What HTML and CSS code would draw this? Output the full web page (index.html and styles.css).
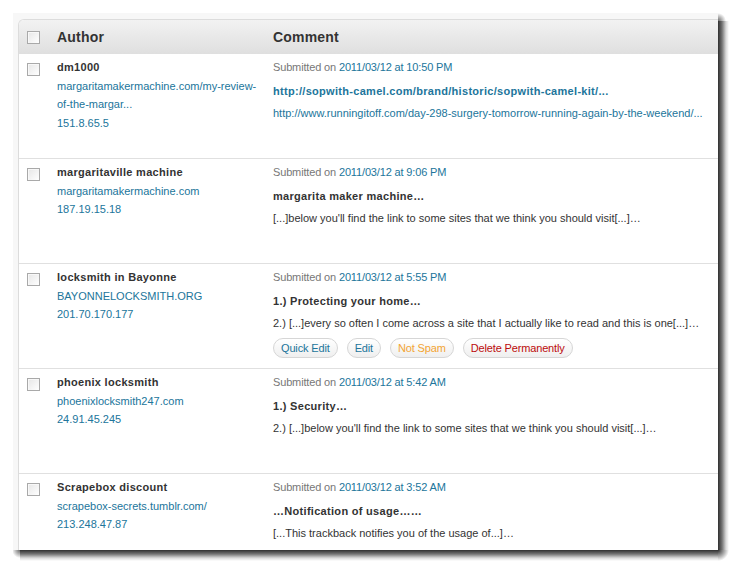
FILE: index.html
```html
<!DOCTYPE html>
<html>
<head>
<meta charset="utf-8">
<link rel="stylesheet" href="styles.css">
</head>
<body>
<div class="frame">
<div class="shot">
  <div class="table">
    <div class="head">
      <div class="cb-cell"><span class="cb"></span></div>
      <div class="th">Author</div>
      <div class="th">Comment</div>
    </div>

    <div class="row">
      <div class="cb-cell"><span class="cb"></span></div>
      <div class="author">
        <div class="name">dm1000</div>
        <a class="link">margaritamakermachine.com/my-review-<br>of-the-margar...</a>
        <a class="link">151.8.65.5</a>
      </div>
      <div class="comment">
        <div class="meta">Submitted on <a>2011/03/12 at 10:50 PM</a></div>
        <div class="title"><a>http://sopwith-camel.com/brand/historic/sopwith-camel-kit/...</a></div>
        <div class="body"><a>http://www.runningitoff.com/day-298-surgery-tomorrow-running-again-by-the-weekend/...</a></div>
      </div>
    </div>

    <div class="row">
      <div class="cb-cell"><span class="cb"></span></div>
      <div class="author">
        <div class="name">margaritaville machine</div>
        <a class="link">margaritamakermachine.com</a>
        <a class="link">187.19.15.18</a>
      </div>
      <div class="comment">
        <div class="meta">Submitted on <a>2011/03/12 at 9:06 PM</a></div>
        <div class="title">margarita maker machine…</div>
        <div class="body">[...]below  you'll find the link to some sites that we think you should visit[...]…</div>
      </div>
    </div>

    <div class="row">
      <div class="cb-cell"><span class="cb"></span></div>
      <div class="author">
        <div class="name">locksmith in Bayonne</div>
        <a class="link">BAYONNELOCKSMITH.ORG</a>
        <a class="link">201.70.170.177</a>
      </div>
      <div class="comment">
        <div class="meta">Submitted on <a>2011/03/12 at 5:55 PM</a></div>
        <div class="title">1.) Protecting your home…</div>
        <div class="body">2.) [...]every so often I come across a site that I actually like to read and this is one[...]…</div>
        <div class="actions">
          <span class="btn blue">Quick Edit</span>
          <span class="btn blue">Edit</span>
          <span class="btn orange">Not Spam</span>
          <span class="btn red">Delete Permanently</span>
        </div>
      </div>
    </div>

    <div class="row">
      <div class="cb-cell"><span class="cb"></span></div>
      <div class="author">
        <div class="name">phoenix locksmith</div>
        <a class="link">phoenixlocksmith247.com</a>
        <a class="link">24.91.45.245</a>
      </div>
      <div class="comment">
        <div class="meta">Submitted on <a>2011/03/12 at 5:42 AM</a></div>
        <div class="title">1.) Security…</div>
        <div class="body">2.) [...]below  you'll find the link to some sites that we think you should visit[...]…</div>
      </div>
    </div>

    <div class="row last">
      <div class="cb-cell"><span class="cb"></span></div>
      <div class="author">
        <div class="name">Scrapebox discount</div>
        <a class="link">scrapebox-secrets.tumblr.com/</a>
        <a class="link">213.248.47.87</a>
      </div>
      <div class="comment">
        <div class="meta">Submitted on <a>2011/03/12 at 3:52 AM</a></div>
        <div class="title">…Notification of usage……</div>
        <div class="body">[...This trackback notifies you of the usage of...]…</div>
      </div>
    </div>
  </div>
</div>
</div>
</body>
</html>
```

FILE: styles.css
```css
html, body {
  margin: 0;
  padding: 0;
  background: #ffffff;
  min-height: 564px;
}
body {
  padding: 13px 0 0 13px;
  box-sizing: border-box;
  font-family: "Liberation Sans", Arial, sans-serif;
  font-size: 11px;
  color: #333333;
}
.frame {
  width: 717px;
  height: 549px;
  background:
    radial-gradient(circle at 0 0, rgba(0,0,0,0.82) 0, rgba(0,0,0,0.5) 4px, rgba(0,0,0,0) 11px) 705px 537px / 12px 12px no-repeat,
    linear-gradient(to right, rgba(0,0,0,0.82) 0, rgba(0,0,0,0.55) 4px, rgba(0,0,0,0.15) 8px, rgba(0,0,0,0) 11px) 705px 8px / 12px 529px no-repeat,
    linear-gradient(to bottom, rgba(0,0,0,0.82) 0, rgba(0,0,0,0.55) 4px, rgba(0,0,0,0.15) 8px, rgba(0,0,0,0) 11px) 7px 537px / 698px 12px no-repeat,
    radial-gradient(circle at 0 100%, rgba(0,0,0,0.6) 0, rgba(0,0,0,0) 8px) 705px 0 / 12px 8px no-repeat,
    radial-gradient(circle at 100% 0, rgba(0,0,0,0.6) 0, rgba(0,0,0,0) 8px) 0 537px / 7px 12px no-repeat;
}
.shot {
  width: 705px;
  height: 537px;
  background: #f7f7f7;
  overflow: hidden;
  padding: 6px 0 0 5px;
  box-sizing: border-box;
}
.table {
  width: 760px;
  height: 560px;
  background: #ffffff;
  border-left: 1px solid #dcdcdc;
  border-top: 1px solid #dcdcdc;
  border-top-left-radius: 6px;
  overflow: hidden;
}
.head {
  display: grid;
  grid-template-columns: 38px 216px 1fr;
  height: 34px;
  background: linear-gradient(#f2f2f2, #dfdfdf);
  align-items: start;
}
.head .cb-cell {
  padding-top: 11px;
}
.th {
  font-size: 14px;
  font-weight: bold;
  color: #333333;
  line-height: 18px;
  padding-top: 8px;
  letter-spacing: 0.2px;
}
.cb-cell {
  padding-left: 8px;
  padding-top: 9px;
}
.cb {
  display: block;
  width: 11px;
  height: 11px;
  border: 1px solid #a9a9a9;
  background: linear-gradient(135deg, #e6e6e6, #ffffff);
  box-shadow: inset 1px 1px 0 #f8f8f8;
}
.row {
  display: grid;
  grid-template-columns: 38px 216px 1fr;
  height: 104px;
  border-bottom: 1px solid #e0e0e0;
  box-sizing: content-box;
}
.row.last {
  border-bottom: none;
}
.author {
  padding-top: 4px;
  line-height: 18.5px;
}
.name {
  font-weight: bold;
  color: #333333;
  letter-spacing: 0.3px;
}
.link, a {
  color: #21759b;
  text-decoration: none;
}
.author .link {
  display: block;
}
.comment {
  padding-top: 4px;
  white-space: nowrap;
}
.meta {
  line-height: 18px;
  color: #777777;
  letter-spacing: -0.15px;
}
.title {
  margin-top: 6px;
  line-height: 18px;
  font-weight: bold;
  color: #333333;
  letter-spacing: 0.3px;
}
.body {
  margin-top: 4px;
  line-height: 18px;
  color: #333333;
}
.actions {
  display: flex;
  gap: 9px;
  margin-top: 6px;
}
.btn {
  display: inline-block;
  height: 18px;
  line-height: 18px;
  padding: 0 7px;
  border: 1px solid #d6d6d6;
  border-radius: 10px;
  background: linear-gradient(#ffffff, #efefef);
  font-size: 11px;
  letter-spacing: -0.15px;
}
.blue { color: #21759b; }
.orange { color: #f3a533; }
.red { color: #bc0b0b; }
```
